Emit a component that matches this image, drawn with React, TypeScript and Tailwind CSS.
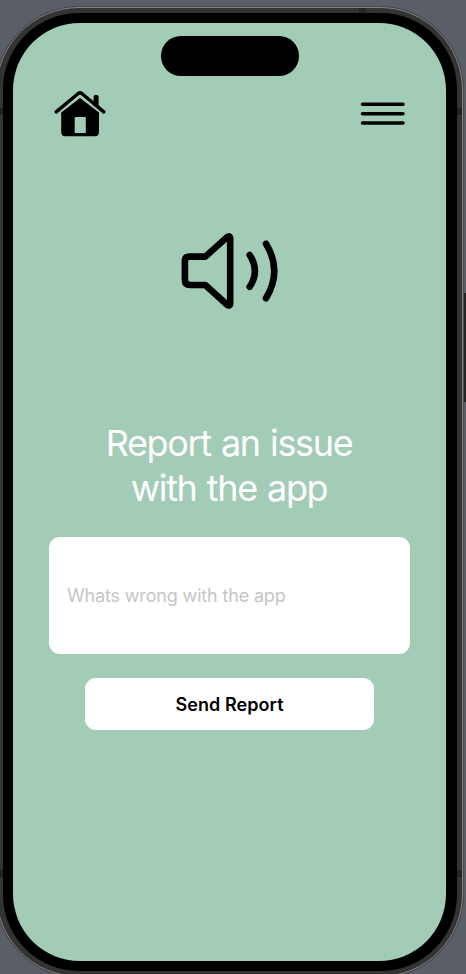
import React from "react";

function HomeIcon() {
  return (
    <svg width="54" height="48" viewBox="0 0 54 48" fill="none">
      <path d="M40.6 17V7.7Q40.6 6.1 42.2 6.1H44Q45.6 6.1 45.6 7.7V18Z" fill="#000" />
      <path d="M3.2 22.9L25.2 4.5Q27 3.1 28.8 4.5L50.8 22.9" stroke="#000" strokeWidth="3.5" strokeLinecap="round" />
      <path
        fillRule="evenodd"
        d="M8.2 23.6L27 8.9L46 23.6V43Q46 47.2 41.8 47.2H12.4Q8.2 47.2 8.2 43ZM22.7 27.9Q21.7 27.9 21.7 28.9V43.9H32.8V28.9Q32.8 27.9 31.8 27.9Z"
        fill="#000"
      />
    </svg>
  );
}

function MenuIcon() {
  return (
    <svg width="46" height="24" viewBox="0 0 46 24" stroke="#000" strokeWidth="3.5" strokeLinecap="round">
      <path d="M2.5 2.3H43M2.5 11.8H43M2.5 21.1H43" />
    </svg>
  );
}

function SpeakerIcon() {
  return (
    <svg width="100" height="80" viewBox="0 0 100 80" fill="none" stroke="#000" strokeWidth="6.6" strokeLinecap="round" strokeLinejoin="round">
      <path d="M4.9 31.2Q4.9 26.6 9.5 26.6H25.3L46.8 7.4Q50.2 4.8 50.2 8.8V73Q50.2 77 46.8 74.5L25.3 55H10.1Q4.9 55 4.9 50Z" />
      <path d="M69.7 25Q80.1 41 69.7 56.8" />
      <path d="M86 13.7Q102.6 41 86 68.2" />
    </svg>
  );
}

export default function App() {
  return (
    <div className="h-[974px] w-[466px] overflow-hidden bg-[#5a5e67] pt-[6px] font-['Inter','Liberation_Sans',sans-serif]">
      <div className="relative -ml-[5px] h-[972px] w-[469px] rounded-[84px] border border-[#47494d] bg-[#333333]">
        <div className="absolute inset-0 rounded-[83px] border border-[#858585]" />
        <span className="absolute top-px left-[363px] h-[6px] w-[7px] bg-[#272727]" />
        <span className="absolute top-[101px] left-px h-[7px] w-[7px] bg-[#222222]" />
        <span className="absolute top-[101px] right-px h-[7px] w-[6px] bg-[#222222]" />
        <span className="absolute top-[863px] left-px h-[7px] w-[7px] bg-[#222222]" />
        <span className="absolute top-[863px] right-px h-[7px] w-[6px] bg-[#222222]" />
        <span className="absolute top-[286px] -right-[4px] h-[109px] w-[3px] bg-[#242424]" />

        <div className="relative mt-[6px] ml-[7px] h-[958px] w-[454px] rounded-[76px] bg-black p-[10px] pr-[11px]">
          <main className="flex h-full flex-col items-center overflow-hidden rounded-[67px] bg-[#a2ccb6]">
            <div className="mt-[12.5px] h-[40.5px] w-[138px] shrink-0 rounded-full bg-black" />
            <header className="mt-[13px] flex w-full items-start justify-between pr-[40px] pl-[40px]">
              <button aria-label="Home">
                <HomeIcon />
              </button>
              <button aria-label="Menu" className="mt-[13px]">
                <MenuIcon />
              </button>
            </header>
            <div className="mt-[93px]">
              <SpeakerIcon />
            </div>
            <h1 className="mt-[111px] pr-px text-center text-[36px] leading-[45px] font-normal tracking-[-1.35px] [word-spacing:1.5px] text-white">
              Report an issue
              <br />
              with the app
            </h1>
            <input
              className="mt-[25.6px] h-[117px] w-[361px] shrink-0 rounded-[11px] bg-white px-[18px] text-[18px] tracking-[-0.16px] outline-none placeholder:text-[#c5c5c7]"
              placeholder="Whats wrong with the app"
            />
            <button className="mt-[24.8px] h-[52px] w-[289px] shrink-0 rounded-[11px] bg-white text-[18px] font-semibold tracking-[0.08px] text-black">
              Send Report
            </button>
          </main>
        </div>
      </div>
    </div>
  );
}
